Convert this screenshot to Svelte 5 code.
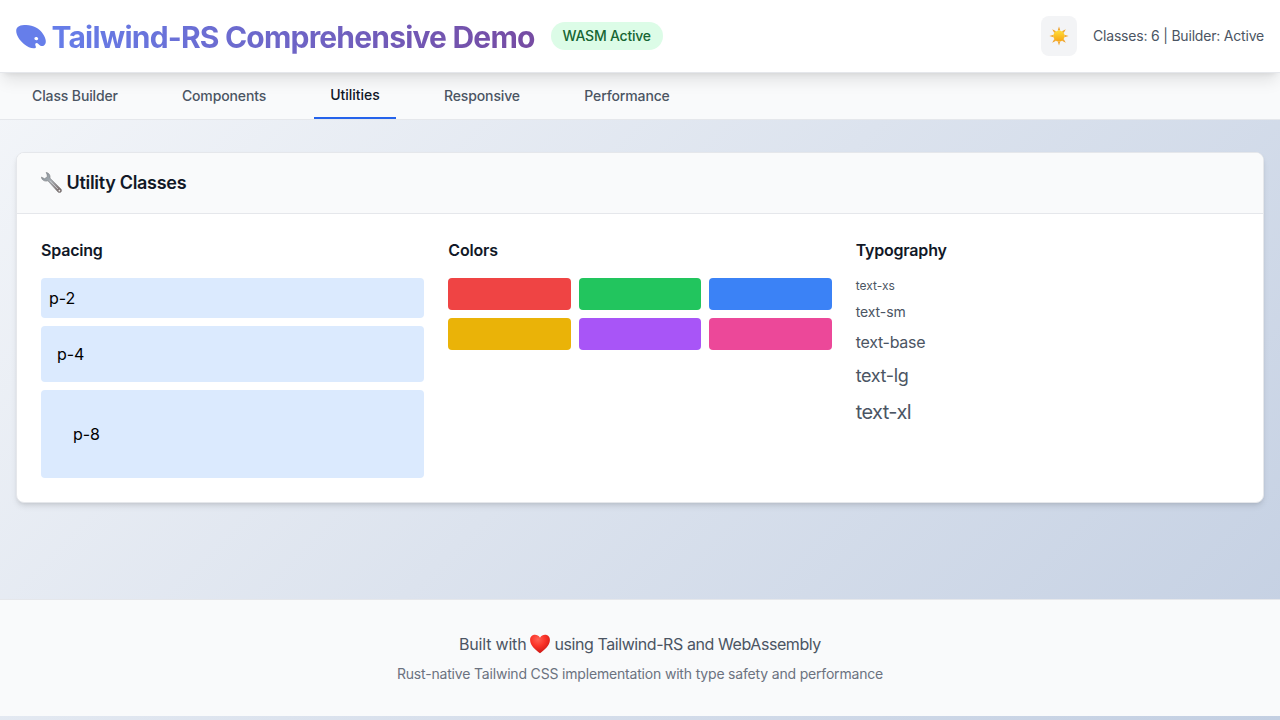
<script>
  const tabs = [
    { name: 'Class Builder', w: 118 },
    { name: 'Components', w: 116 },
    { name: 'Utilities', w: 82, active: true },
    { name: 'Responsive', w: 108 },
    { name: 'Performance', w: 118 }
  ];
  const colors = ['#ef4444', '#22c55e', '#3b82f6', '#eab308', '#a855f7', '#ec4899'];
</script>

<div class="page">
  <header>
    <div class="brand">
      <h1>
        <svg width="32" height="36" viewBox="0.8 -0.6 32 36">
          <path fill="#667eea" fill-rule="evenodd" d="M1 12.200C1 7.500 5.300 6.400 11 6.400C18 6.400 24.500 10.100 27.800 15.300C31 20.300 31.700 24.700 28.800 26.800C26.800 28.200 24.500 27 23.200 25.300C21.700 23.500 19.700 24.300 20.100 26.400C20.400 28 21.300 28.600 20.200 29.300C17.800 30.600 12.700 28.700 8.700 25.400C4.500 21.800 1 16.800 1 12.200ZM19.200 20C19.200 21 20.300 21.700 21.500 21.600C22.600 21.500 23.100 20.900 23 20C22.800 19 21.800 18.400 20.700 18.500C19.800 18.600 19.200 19.200 19.200 20Z" />
        </svg>
        <span>Tailwind-RS Comprehensive Demo</span>
      </h1>
      <span class="badge">WASM Active</span>
    </div>
    <div class="status">
      <button aria-label="Toggle theme">
        <svg width="20" height="20" viewBox="0 0 20 20">
          <defs>
            <linearGradient id="sun" x2="0" y2="1"><stop stop-color="#ffdf38" /><stop offset="1" stop-color="#f7a414" /></linearGradient>
          </defs>
          <path fill="#f0a52e" d="M10 .4L11.300 4.600H8.700ZM10 19.600L11.300 15.400H8.700ZM.4 10L4.600 8.700V11.300ZM19.600 10L15.400 8.700V11.300ZM3.200 3.200L7.100 5.300L5.300 7.100ZM16.800 3.200L14.700 7.100L12.900 5.300ZM3.200 16.800L5.300 12.900L7.100 14.700ZM16.800 16.800L12.900 14.700L14.700 12.900Z" />
          <circle cx="10" cy="10" r="5.600" fill="url(#sun)" />
        </svg>
      </button>
      <span class="count">Classes: 6 | Builder: Active</span>
    </div>
  </header>

  <nav>
    {#each tabs as tab}
      <a href="#top" class:active={tab.active} style="width:{tab.w}px"><span>{tab.name}</span></a>
    {/each}
  </nav>

  <main>
    <section class="card">
      <div class="card-head">
        <svg width="22" height="24" viewBox="0.6 0.8 22 24">
          <defs>
            <linearGradient id="steel" x2="1" y2="1"><stop stop-color="#81909a" /><stop offset=".45" stop-color="#a7acb1" /><stop offset="1" stop-color="#705f5c" /></linearGradient>
          </defs>
          <path d="M5.800 2.200C8.500 2.600 10.200 5 9.600 8L20.400 18.600C22.500 20.800 20 23.600 17.500 21.700L7.500 10.600C4.500 11.600 1.400 10 .9 6.900L4.300 8.500L7 6.300L6.600 4.300Z" fill="url(#steel)" stroke="#7d7e82" stroke-width=".6" />
          <path d="M9.500 10.500L17.500 18.800" stroke="#d5d7d9" stroke-width=".8" />
          <circle cx="19" cy="20.500" r=".9" fill="#eee" />
        </svg>
        <h2>Utility Classes</h2>
      </div>
      <div class="columns">
        <div>
          <h3>Spacing</h3>
          <div class="stack">
            <div class="box p2">p-2</div>
            <div class="box p4">p-4</div>
            <div class="box p8">p-8</div>
          </div>
        </div>
        <div>
          <h3>Colors</h3>
          <div class="swatches">
            {#each colors as color}
              <div style="background:{color}"></div>
            {/each}
          </div>
        </div>
        <div>
          <h3>Typography</h3>
          <div class="stack typo">
            <div class="xs">text-xs</div>
            <div class="sm">text-sm</div>
            <div class="base">text-base</div>
            <div class="lg">text-lg</div>
            <div class="xl">text-xl</div>
          </div>
        </div>
      </div>
    </section>
  </main>

  <footer>
    <p class="built">
      <span class="lead">Built with</span>
      <svg width="20" height="20" viewBox="0 0 20 20">
        <defs>
          <radialGradient id="heart" cx=".4" cy=".25" r=".8"><stop stop-color="#ff6255" /><stop offset=".45" stop-color="#fb3429" /><stop offset="1" stop-color="#c51412" /></radialGradient>
        </defs>
        <path fill="url(#heart)" d="M10 3.800C11.200 1.500 13.100.8 15 .8C18 .8 19.900 3 19.900 6C19.900 11.500 14.500 16 10 19.300C5.500 16 .1 11.500.1 6C.1 3 2 .8 5 .8C6.900.8 8.800 1.500 10 3.800Z" />
      </svg>
      <span class="rest">using Tailwind-RS and WebAssembly</span>
    </p>
    <p class="note">Rust-native Tailwind CSS implementation with type safety and performance</p>
  </footer>
</div>

<style>
  :global(body) {
    margin: 0;
    min-height: 720px;
    background: linear-gradient(135deg, #f5f7fa 0%, #c3cfe2 100%);
    font-family: Inter, "Liberation Sans", sans-serif;
    line-height: 24px;
  }
  .page, .page * { box-sizing: border-box; }
  h1, h2, h3, p { margin: 0; }
  svg { display: block; flex: none; }
  header {
    height: 73px;
    padding: 0 16px;
    display: flex;
    align-items: center;
    justify-content: space-between;
    background: #fff;
    border-bottom: 1px solid #e5e7eb;
    position: relative;
    box-shadow: 0 10px 15px -3px rgb(0 0 0 / .1), 0 4px 6px -4px rgb(0 0 0 / .1);
  }
  .brand, .status { display: flex; align-items: center; gap: 16px; }
  h1 {
    display: flex;
    gap: 3.500px;
    font-size: 30px;
    line-height: 36px;
    font-weight: 700;
    letter-spacing: -.81px;
    white-space: nowrap;
  }
  h1 span {
    padding-top: 1px;
    margin-bottom: -1px;
    background: linear-gradient(100deg, #667eea, #764ba2);
    background-clip: text;
    color: transparent;
  }
  .badge {
    height: 28px;
    padding: 4px 12px;
    border-radius: 14px;
    background: #dcfce7;
    color: #166534;
    font-size: 14px;
    line-height: 20px;
    font-weight: 500;
    letter-spacing: -.23px;
  }
  button {
    width: 36px;
    height: 40px;
    padding: 0;
    border: 0;
    border-radius: 8px;
    background: #f3f4f6;
    display: grid;
    place-items: center;
  }
  .count { font-size: 14px; line-height: 20px; letter-spacing: -.2px; color: #4b5563; }
  nav {
    height: 47px;
    padding: 0 16px;
    display: flex;
    gap: 32px;
    background: #f9fafb;
    border-bottom: 1px solid #e5e7eb;
  }
  nav a {
    display: flex;
    align-items: center;
    justify-content: center;
    font-size: 14px;
    font-weight: 500;
    letter-spacing: -.13px;
    color: #4b5563;
    text-decoration: none;
    white-space: nowrap;
  }
  nav a.active { color: #111827; letter-spacing: -.03px; border-bottom: 2px solid #2563eb; }
  main { padding: 32px 16px 96px; }
  .card {
    border: 1px solid #e5e7eb;
    border-radius: 8px;
    background: #fff;
    overflow: hidden;
    box-shadow: 0 4px 6px -1px rgb(0 0 0 / .1), 0 2px 4px -2px rgb(0 0 0 / .1);
  }
  .card-head {
    height: 61px;
    padding: 0 24px;
    display: flex;
    align-items: center;
    gap: 3.500px;
    background: #f9fafb;
    border-bottom: 1px solid #e5e7eb;
  }
  h2 { font-size: 18px; line-height: 28px; font-weight: 600; letter-spacing: -.3px; color: #111827; }
  .columns {
    padding: 24px;
    display: grid;
    grid-template-columns: repeat(3, 1fr);
    gap: 24px;
  }
  h3 { margin-bottom: 16px; font-size: 16px; font-weight: 600; letter-spacing: -.2px; color: #111827; }
  .stack { display: flex; flex-direction: column; gap: 8px; }
  .box { background: #dbeafe; border-radius: 4px; color: #000; letter-spacing: -.1px; }
  .p2 { padding: 8px; }
  .p4 { padding: 16px; }
  .p8 { padding: 32px; }
  .swatches { display: grid; grid-template-columns: repeat(3, 1fr); gap: 8px; }
  .swatches div { height: 32px; border-radius: 4px; }
  .typo { color: #4b5563; }
  .xs { font-size: 12px; line-height: 16px; }
  .sm { font-size: 14px; line-height: 20px; letter-spacing: -.08px; }
  .base { font-size: 16px; line-height: 24px; letter-spacing: -.28px; }
  .lg { font-size: 18px; line-height: 28px; letter-spacing: -.35px; }
  .xl { font-size: 20px; line-height: 28px; letter-spacing: -.6px; }
  footer {
    height: 117px;
    padding-top: 32px;
    border-top: 1px solid #e5e7eb;
    background: #f9fafb;
    text-align: center;
  }
  .built { display: flex; justify-content: center; align-items: center; gap: 4px; color: #4b5563; }
  .lead { letter-spacing: -.2px; }
  .rest { letter-spacing: -.42px; }
  .note { margin-top: 8px; font-size: 14px; line-height: 20px; letter-spacing: -.18px; color: #6b7280; }
</style>
